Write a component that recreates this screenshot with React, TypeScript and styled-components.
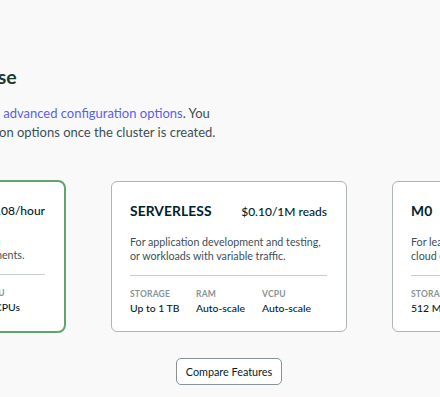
import styled, { createGlobalStyle } from 'styled-components';

const GlobalStyle = createGlobalStyle`
  html, body {
    margin: 0;
    padding: 0;
    background: #f9f9f9;
  }
  body {
    font-family: Lato, "Noto Sans", sans-serif;
  }
`;

const Viewport = styled.div`
  width: 440px;
  height: 397px;
  overflow: hidden;
  background: #f9f9f9;
`;

const Page = styled.div`
  width: 900px;
  margin-left: -216px;
  padding-top: 64px;
  display: flex;
  flex-direction: column;
`;

const Header = styled.header`
  display: flex;
  flex-direction: column;
  gap: 14px;
  margin-left: 45px;
`;

const Heading = styled.h1`
  margin: 0;
  font-size: 19.5px;
  line-height: 26px;
  font-weight: 700;
  color: #1c3b31;
`;

const Intro = styled.p`
  margin: 0;
  width: 392px;
  font-size: 13px;
  line-height: 19px;
  color: #3d4f58;
`;

const Link = styled.a`
  color: #5b5ff0;
  text-decoration: none;
`;

const CardRow = styled.div`
  display: flex;
  gap: 45px;
  margin: 39px 0 0 46px;
  width: 798px;
`;

const Card = styled.div<{ $selected?: boolean }>`
  box-sizing: border-box;
  width: 236px;
  height: 151px;
  padding: 20px 19px 0 18px;
  background: #fff;
  border: 1px solid #aeb5b6;
  border-radius: 6px;
  display: flex;
  flex-direction: column;
  ${p =>
    p.$selected &&
    `
    border: 2px solid #62a46e;
    border-radius: 8px;
    height: 153px;
    margin-top: -1px;
    padding: 19px 19px 0 17px;
  `}
`;

const CardHead = styled.div`
  display: flex;
  justify-content: space-between;
  align-items: baseline;
  color: #001e2b;
`;

const Tier = styled.span`
  font-size: 13.8px;
  font-weight: 700;
  letter-spacing: 0.1px;
`;

const Price = styled.span`
  font-size: 12px;
  font-weight: 500;
`;

const Description = styled.p`
  margin: 16px 0 0;
  height: 28px;
  font-size: 10.7px;
  line-height: 14px;
  color: #3d4f58;
`;

const Divider = styled.hr`
  margin: 12px 0 0;
  border: 0;
  border-top: 1px solid #c8cdcd;
`;

const Specs = styled.div`
  display: grid;
  grid-template-columns: 66px 66px 66px;
  margin-top: 13px;
  row-gap: 3px;
`;

const SpecLabel = styled.span`
  font-size: 8.5px;
  font-weight: 700;
  letter-spacing: 0.2px;
  text-transform: uppercase;
  color: #889397;
`;

const SpecValue = styled.span`
  font-size: 10.4px;
  font-weight: 500;
  color: #001e2b;
  white-space: nowrap;
`;

const Footer = styled.div`
  display: flex;
  justify-content: center;
  margin: 25px 0 0 46px;
  width: 798px;
`;

const CompareButton = styled.button`
  height: 27px;
  padding: 0 9px;
  font-family: inherit;
  font-size: 10.8px;
  color: #001e2b;
  background: #fff;
  border: 1px solid #889397;
  border-radius: 5px;
`;

interface Plan {
  tier: string;
  price: string;
  description: string;
  storage: string;
  ram: string;
  vcpu: string;
  selected?: boolean;
}

const plans: Plan[] = [
  {
    tier: 'M10',
    price: '$0.08/hour',
    description:
      'For production applications with sophisticated workload requirements.',
    storage: '10 GB',
    ram: '2 GB',
    vcpu: '2 vCPUs',
    selected: true,
  },
  {
    tier: 'SERVERLESS',
    price: '$0.10/1M reads',
    description:
      'For application development and testing, or workloads with variable traffic.',
    storage: 'Up to 1 TB',
    ram: 'Auto-scale',
    vcpu: 'Auto-scale',
  },
  {
    tier: 'M0',
    price: 'FREE',
    description: 'For learning and exploring MongoDB in a cloud environment.',
    storage: '512 MB',
    ram: 'Shared',
    vcpu: 'Shared',
  },
];

export default function App() {
  return (
    <>
      <GlobalStyle />
      <Viewport>
        <Page>
          <Header>
            <Heading>Deploy your database</Heading>
            <Intro>
              Use a template below or{' '}
              <Link href="#">go to advanced configuration options</Link>. You
              can also edit these configuration options once the cluster is
              created.
            </Intro>
          </Header>
          <CardRow>
            {plans.map(plan => (
              <Card key={plan.tier} $selected={plan.selected}>
                <CardHead>
                  <Tier>{plan.tier}</Tier>
                  <Price>{plan.price}</Price>
                </CardHead>
                <Description>{plan.description}</Description>
                <Divider />
                <Specs>
                  <SpecLabel>Storage</SpecLabel>
                  <SpecLabel>RAM</SpecLabel>
                  <SpecLabel>vCPU</SpecLabel>
                  <SpecValue>{plan.storage}</SpecValue>
                  <SpecValue>{plan.ram}</SpecValue>
                  <SpecValue>{plan.vcpu}</SpecValue>
                </Specs>
              </Card>
            ))}
          </CardRow>
          <Footer>
            <CompareButton>Compare Features</CompareButton>
          </Footer>
        </Page>
      </Viewport>
    </>
  );
}
